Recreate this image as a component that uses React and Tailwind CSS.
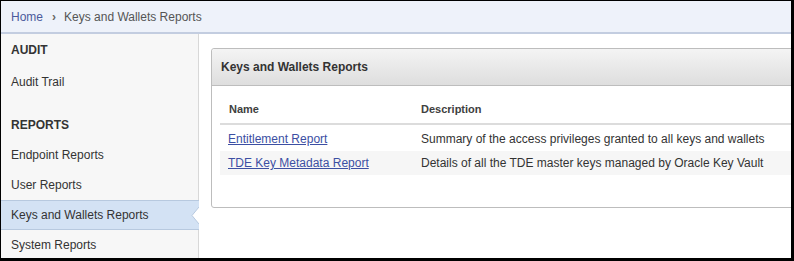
import React from 'react';

const sideItems = [
  { label: 'Endpoint Reports' },
  { label: 'User Reports' },
  { label: 'Keys and Wallets Reports', active: true },
  { label: 'System Reports' },
];

const reports = [
  { name: 'Entitlement Report', desc: 'Summary of the access privileges granted to all keys and wallets' },
  { name: 'TDE Key Metadata Report', desc: 'Details of all the TDE master keys managed by Oracle Key Vault' },
];

export default function App() {
  return (
    <div
      className="w-[794px] h-[261px] overflow-hidden bg-black border-l border-t border-r-[3px] border-b-[3px] border-black flex flex-col text-[12px] text-[#333]"
      style={{ fontFamily: '"Liberation Sans", Arial, sans-serif' }}
    >
      {/* Breadcrumb */}
      <div className="h-[33px] shrink-0 bg-[#eef2fa] border-b-2 border-[#c3cde0] flex items-center pl-[10px]">
        <span className="text-[#4b5a9c]">Home</span>
        <span className="ml-[9px] mr-[8px] text-[#666] font-bold text-[12px] leading-none">›</span>
        <span className="text-[#555]">Keys and Wallets Reports</span>
      </div>

      <div className="flex flex-1 min-h-0">
        {/* Sidebar */}
        <div className="w-[198px] shrink-0 bg-[#f7f7f7] border-r border-[#d8d8d8] pt-px">
          <div className="h-[30px] flex items-center pl-[10px] font-bold text-[#333]">AUDIT</div>
          <div className="h-[31px] flex items-center pl-[10px] pt-[2px]">Audit Trail</div>
          <div className="h-[14px]" />
          <div className="h-[30px] flex items-center pl-[10px] font-bold text-[#333]">REPORTS</div>
          {sideItems.map((item) =>
            item.active ? (
              <div
                key={item.label}
                className="relative h-[30px] flex items-center pl-[10px] bg-[#d3e2f4] border-y border-[#b7c9df] -mr-px"
              >
                {item.label}
                <svg className="absolute right-0 top-[6px]" width="8" height="17" viewBox="0 0 8 17">
                  <polygon points="8,0 1,8.5 8,17" fill="#ffffff" />
                  <polyline points="8,0 1,8.5 8,17" fill="none" stroke="#b7c9df" strokeWidth="1" />
                </svg>
              </div>
            ) : (
              <div key={item.label} className="h-[30px] flex items-center pl-[10px]">
                {item.label}
              </div>
            )
          )}
        </div>

        {/* Main */}
        <div className="flex-1 min-w-0 bg-white overflow-hidden pt-[14px] pl-[12px]">
          <div className="w-[600px] border border-[#bdbdbd] rounded-[3px] bg-white">
            <div className="h-[37px] bg-gradient-to-b from-[#f4f4f4] to-[#dedede] border-b border-[#bdbdbd] rounded-t-[3px] flex items-center pl-[9px] font-bold text-[#333]">
              Keys and Wallets Reports
            </div>
            <div className="pl-[8px] pt-[10px] pb-[32px]">
              <div className="flex h-[29px] items-center border-b-2 border-[#dcdcdc] text-[11px] font-bold text-[#404040]">
                <div className="w-[193px] pl-[9px]">Name</div>
                <div className="pl-[8px]">Description</div>
              </div>
              <div className="h-[2px]" />
              {reports.map((r, i) => (
                <div
                  key={r.name}
                  className={`flex h-[24px] items-center ${i % 2 === 1 ? 'bg-[#f6f6f6]' : 'bg-white'}`}
                >
                  <div className="w-[193px] pl-[8px]">
                    <a href="#" className="text-[#3c4fa3] underline">
                      {r.name}
                    </a>
                  </div>
                  <div className="pl-[8px] text-[#333] whitespace-nowrap">{r.desc}</div>
                </div>
              ))}
            </div>
          </div>
        </div>
      </div>
    </div>
  );
}
